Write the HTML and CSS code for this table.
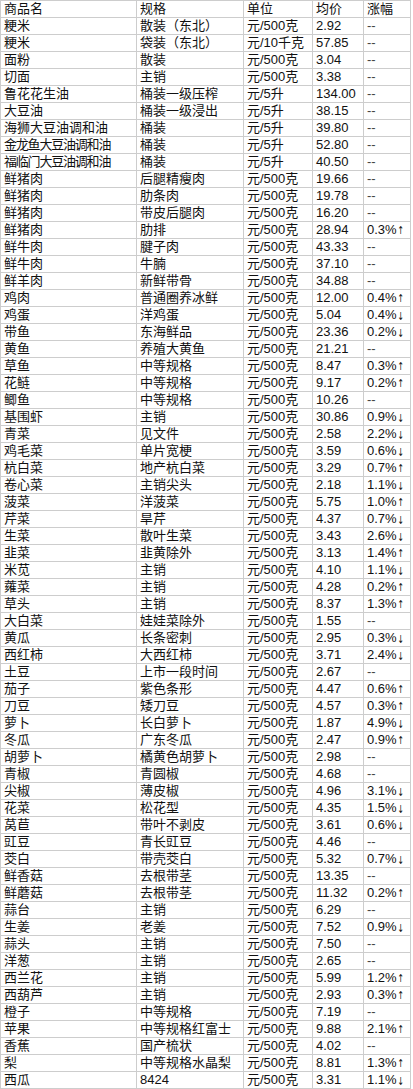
FILE: index.html
```html
<!DOCTYPE html>
<html lang="zh-CN">
<head>
<meta charset="utf-8">
<title>价格表</title>
<link rel="stylesheet" href="styles.css">
</head>
<body>
<div class="sheet">
<div class="row"><div class="c">商品名</div><div class="c">规格</div><div class="c">单位</div><div class="c">均价</div><div class="c">涨幅</div></div>
<div class="row"><div class="c">粳米</div><div class="c">散装（东北）</div><div class="c">元/500克</div><div class="c">2.92</div><div class="c dash">--</div></div>
<div class="row"><div class="c">粳米</div><div class="c">袋装（东北）</div><div class="c">元/10千克</div><div class="c">57.85</div><div class="c dash">--</div></div>
<div class="row"><div class="c">面粉</div><div class="c">散装</div><div class="c">元/500克</div><div class="c">3.04</div><div class="c dash">--</div></div>
<div class="row"><div class="c">切面</div><div class="c">主销</div><div class="c">元/500克</div><div class="c">3.38</div><div class="c dash">--</div></div>
<div class="row"><div class="c">鲁花花生油</div><div class="c">桶装一级压榨</div><div class="c">元/5升</div><div class="c">134.00</div><div class="c dash">--</div></div>
<div class="row"><div class="c">大豆油</div><div class="c">桶装一级浸出</div><div class="c">元/5升</div><div class="c">38.15</div><div class="c dash">--</div></div>
<div class="row"><div class="c">海狮大豆油调和油</div><div class="c">桶装</div><div class="c">元/5升</div><div class="c">39.80</div><div class="c dash">--</div></div>
<div class="row"><div class="c narrow">金龙鱼大豆油调和油</div><div class="c">桶装</div><div class="c">元/5升</div><div class="c">52.80</div><div class="c dash">--</div></div>
<div class="row"><div class="c narrow">福临门大豆油调和油</div><div class="c">桶装</div><div class="c">元/5升</div><div class="c">40.50</div><div class="c dash">--</div></div>
<div class="row"><div class="c">鲜猪肉</div><div class="c">后腿精瘦肉</div><div class="c">元/500克</div><div class="c">19.66</div><div class="c dash">--</div></div>
<div class="row"><div class="c">鲜猪肉</div><div class="c">肋条肉</div><div class="c">元/500克</div><div class="c">19.78</div><div class="c dash">--</div></div>
<div class="row"><div class="c">鲜猪肉</div><div class="c">带皮后腿肉</div><div class="c">元/500克</div><div class="c">16.20</div><div class="c dash">--</div></div>
<div class="row"><div class="c">鲜猪肉</div><div class="c">肋排</div><div class="c">元/500克</div><div class="c">28.94</div><div class="c">0.3%<span class="ar">↑</span></div></div>
<div class="row"><div class="c">鲜牛肉</div><div class="c">腱子肉</div><div class="c">元/500克</div><div class="c">43.33</div><div class="c dash">--</div></div>
<div class="row"><div class="c">鲜牛肉</div><div class="c">牛腩</div><div class="c">元/500克</div><div class="c">37.10</div><div class="c dash">--</div></div>
<div class="row"><div class="c">鲜羊肉</div><div class="c">新鲜带骨</div><div class="c">元/500克</div><div class="c">34.88</div><div class="c dash">--</div></div>
<div class="row"><div class="c">鸡肉</div><div class="c">普通圈养冰鲜</div><div class="c">元/500克</div><div class="c">12.00</div><div class="c">0.4%<span class="ar">↑</span></div></div>
<div class="row"><div class="c">鸡蛋</div><div class="c">洋鸡蛋</div><div class="c">元/500克</div><div class="c">5.04</div><div class="c">0.4%<span class="ar dn">↓</span></div></div>
<div class="row"><div class="c">带鱼</div><div class="c">东海鲜品</div><div class="c">元/500克</div><div class="c">23.36</div><div class="c">0.2%<span class="ar dn">↓</span></div></div>
<div class="row"><div class="c">黄鱼</div><div class="c">养殖大黄鱼</div><div class="c">元/500克</div><div class="c">21.21</div><div class="c dash">--</div></div>
<div class="row"><div class="c">草鱼</div><div class="c">中等规格</div><div class="c">元/500克</div><div class="c">8.47</div><div class="c">0.3%<span class="ar">↑</span></div></div>
<div class="row"><div class="c">花鲢</div><div class="c">中等规格</div><div class="c">元/500克</div><div class="c">9.17</div><div class="c">0.2%<span class="ar">↑</span></div></div>
<div class="row"><div class="c">鲫鱼</div><div class="c">中等规格</div><div class="c">元/500克</div><div class="c">10.26</div><div class="c dash">--</div></div>
<div class="row"><div class="c">基围虾</div><div class="c">主销</div><div class="c">元/500克</div><div class="c">30.86</div><div class="c">0.9%<span class="ar dn">↓</span></div></div>
<div class="row"><div class="c">青菜</div><div class="c">见文件</div><div class="c">元/500克</div><div class="c">2.58</div><div class="c">2.2%<span class="ar dn">↓</span></div></div>
<div class="row"><div class="c">鸡毛菜</div><div class="c">单片宽梗</div><div class="c">元/500克</div><div class="c">3.59</div><div class="c">0.6%<span class="ar dn">↓</span></div></div>
<div class="row"><div class="c">杭白菜</div><div class="c">地产杭白菜</div><div class="c">元/500克</div><div class="c">3.29</div><div class="c">0.7%<span class="ar">↑</span></div></div>
<div class="row"><div class="c">卷心菜</div><div class="c">主销尖头</div><div class="c">元/500克</div><div class="c">2.18</div><div class="c">1.1%<span class="ar dn">↓</span></div></div>
<div class="row"><div class="c">菠菜</div><div class="c">洋菠菜</div><div class="c">元/500克</div><div class="c">5.75</div><div class="c">1.0%<span class="ar">↑</span></div></div>
<div class="row"><div class="c">芹菜</div><div class="c">旱芹</div><div class="c">元/500克</div><div class="c">4.37</div><div class="c">0.7%<span class="ar dn">↓</span></div></div>
<div class="row"><div class="c">生菜</div><div class="c">散叶生菜</div><div class="c">元/500克</div><div class="c">3.43</div><div class="c">2.6%<span class="ar dn">↓</span></div></div>
<div class="row"><div class="c">韭菜</div><div class="c">韭黄除外</div><div class="c">元/500克</div><div class="c">3.13</div><div class="c">1.4%<span class="ar">↑</span></div></div>
<div class="row"><div class="c">米苋</div><div class="c">主销</div><div class="c">元/500克</div><div class="c">4.10</div><div class="c">1.1%<span class="ar dn">↓</span></div></div>
<div class="row"><div class="c">蕹菜</div><div class="c">主销</div><div class="c">元/500克</div><div class="c">4.28</div><div class="c">0.2%<span class="ar">↑</span></div></div>
<div class="row"><div class="c">草头</div><div class="c">主销</div><div class="c">元/500克</div><div class="c">8.37</div><div class="c">1.3%<span class="ar">↑</span></div></div>
<div class="row"><div class="c">大白菜</div><div class="c">娃娃菜除外</div><div class="c">元/500克</div><div class="c">1.55</div><div class="c dash">--</div></div>
<div class="row"><div class="c">黄瓜</div><div class="c">长条密刺</div><div class="c">元/500克</div><div class="c">2.95</div><div class="c">0.3%<span class="ar dn">↓</span></div></div>
<div class="row"><div class="c">西红柿</div><div class="c">大西红柿</div><div class="c">元/500克</div><div class="c">3.71</div><div class="c">2.4%<span class="ar dn">↓</span></div></div>
<div class="row"><div class="c">土豆</div><div class="c">上市一段时间</div><div class="c">元/500克</div><div class="c">2.67</div><div class="c dash">--</div></div>
<div class="row"><div class="c">茄子</div><div class="c">紫色条形</div><div class="c">元/500克</div><div class="c">4.47</div><div class="c">0.6%<span class="ar">↑</span></div></div>
<div class="row"><div class="c">刀豆</div><div class="c">矮刀豆</div><div class="c">元/500克</div><div class="c">4.57</div><div class="c">0.3%<span class="ar">↑</span></div></div>
<div class="row"><div class="c">萝卜</div><div class="c">长白萝卜</div><div class="c">元/500克</div><div class="c">1.87</div><div class="c">4.9%<span class="ar dn">↓</span></div></div>
<div class="row"><div class="c">冬瓜</div><div class="c">广东冬瓜</div><div class="c">元/500克</div><div class="c">2.47</div><div class="c">0.9%<span class="ar">↑</span></div></div>
<div class="row"><div class="c">胡萝卜</div><div class="c">橘黄色胡萝卜</div><div class="c">元/500克</div><div class="c">2.98</div><div class="c dash">--</div></div>
<div class="row"><div class="c">青椒</div><div class="c">青圆椒</div><div class="c">元/500克</div><div class="c">4.68</div><div class="c dash">--</div></div>
<div class="row"><div class="c">尖椒</div><div class="c">薄皮椒</div><div class="c">元/500克</div><div class="c">4.96</div><div class="c">3.1%<span class="ar dn">↓</span></div></div>
<div class="row"><div class="c">花菜</div><div class="c">松花型</div><div class="c">元/500克</div><div class="c">4.35</div><div class="c">1.5%<span class="ar dn">↓</span></div></div>
<div class="row"><div class="c">莴苣</div><div class="c">带叶不剥皮</div><div class="c">元/500克</div><div class="c">3.61</div><div class="c">0.6%<span class="ar dn">↓</span></div></div>
<div class="row"><div class="c">豇豆</div><div class="c">青长豇豆</div><div class="c">元/500克</div><div class="c">4.46</div><div class="c dash">--</div></div>
<div class="row"><div class="c">茭白</div><div class="c">带壳茭白</div><div class="c">元/500克</div><div class="c">5.32</div><div class="c">0.7%<span class="ar dn">↓</span></div></div>
<div class="row"><div class="c">鲜香菇</div><div class="c">去根带茎</div><div class="c">元/500克</div><div class="c">13.35</div><div class="c dash">--</div></div>
<div class="row"><div class="c">鲜蘑菇</div><div class="c">去根带茎</div><div class="c">元/500克</div><div class="c">11.32</div><div class="c">0.2%<span class="ar">↑</span></div></div>
<div class="row"><div class="c">蒜台</div><div class="c">主销</div><div class="c">元/500克</div><div class="c">6.29</div><div class="c dash">--</div></div>
<div class="row"><div class="c">生姜</div><div class="c">老姜</div><div class="c">元/500克</div><div class="c">7.52</div><div class="c">0.9%<span class="ar dn">↓</span></div></div>
<div class="row"><div class="c">蒜头</div><div class="c">主销</div><div class="c">元/500克</div><div class="c">7.50</div><div class="c dash">--</div></div>
<div class="row"><div class="c">洋葱</div><div class="c">主销</div><div class="c">元/500克</div><div class="c">2.65</div><div class="c dash">--</div></div>
<div class="row"><div class="c">西兰花</div><div class="c">主销</div><div class="c">元/500克</div><div class="c">5.99</div><div class="c">1.2%<span class="ar">↑</span></div></div>
<div class="row"><div class="c">西葫芦</div><div class="c">主销</div><div class="c">元/500克</div><div class="c">2.93</div><div class="c">0.3%<span class="ar">↑</span></div></div>
<div class="row"><div class="c">橙子</div><div class="c">中等规格</div><div class="c">元/500克</div><div class="c">7.19</div><div class="c dash">--</div></div>
<div class="row"><div class="c">苹果</div><div class="c">中等规格红富士</div><div class="c">元/500克</div><div class="c">9.88</div><div class="c">2.1%<span class="ar">↑</span></div></div>
<div class="row"><div class="c">香蕉</div><div class="c">国产梳状</div><div class="c">元/500克</div><div class="c">4.02</div><div class="c dash">--</div></div>
<div class="row"><div class="c">梨</div><div class="c">中等规格水晶梨</div><div class="c">元/500克</div><div class="c">8.81</div><div class="c">1.3%<span class="ar">↑</span></div></div>
<div class="row"><div class="c">西瓜</div><div class="c">8424</div><div class="c">元/500克</div><div class="c">3.31</div><div class="c">1.1%<span class="ar dn">↓</span></div></div>
</div>
</body>
</html>
```

FILE: styles.css
```css
html, body {
  margin: 0;
  padding: 0;
  background: #fff;
}

.sheet {
  display: grid;
  grid-template-columns: 135px 106px 68px 50px 46px;
  grid-auto-rows: 16px;
  gap: 1px;
  padding: 1px;
  width: max-content;
  background: #cdcdcd;
  font-family: "Liberation Sans", "Noto Sans CJK SC", sans-serif;
  font-size: 13px;
  color: #111;
}

.row {
  display: contents;
}

.c {
  background: #fff;
  padding-left: 3px;
  line-height: 16px;
  white-space: nowrap;
  overflow: hidden;
}

.narrow {
  letter-spacing: -1.2px;
}

.dash {
  color: #444;
}

.ar {
  display: inline-block;
  font-family: "DejaVu Sans", sans-serif;
  font-size: 11px;
  transform: scaleX(0.7);
  margin-left: -1px;
}

.ar.dn {
  position: relative;
  top: 1px;
}
```
